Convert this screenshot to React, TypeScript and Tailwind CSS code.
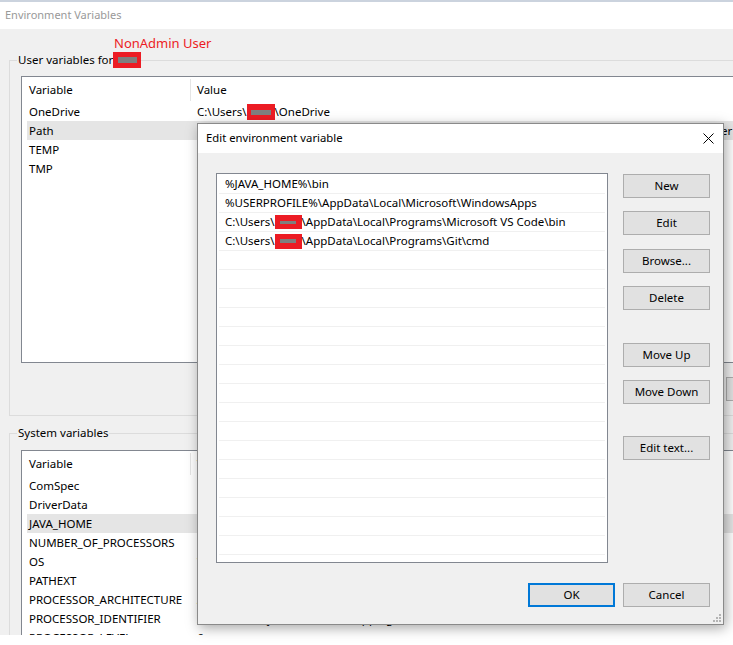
import type { ReactNode } from "react";

const FONT = "font-['Segoe_UI','Noto_Sans',sans-serif]";

function Redact({ w, h, bw, bh }: { w: number; h: number; bw: number; bh: number }) {
  return (
    <span
      className="inline-flex items-center justify-center bg-[#ec1c24] align-middle"
      style={{ width: w, height: h }}
    >
      <span className="block bg-[#7f7f7f]" style={{ width: bw, height: bh }} />
    </span>
  );
}

type Row = { name: string; value: ReactNode; selected?: boolean };

const USER_ROWS: Row[] = [
  {
    name: "OneDrive",
    value: (
      <>
        C:\Users\
        <Redact w={28} h={16} bw={20} bh={5} />
        \OneDrive
      </>
    ),
  },
  {
    name: "Path",
    selected: true,
    value: (
      <>
        <span className="inline-block w-[524px] overflow-hidden whitespace-nowrap align-top">
          C:\Users\Administrator\AppData\Local\Microsoft\WindowsApps;C:\Users\Administrator\AppData\Local\Programs\Microsoft VS Code\bin;C:\Us
        </span>
        er
      </>
    ),
  },
  { name: "TEMP", value: "%USERPROFILE%\\AppData\\Local\\Temp" },
  { name: "TMP", value: "%USERPROFILE%\\AppData\\Local\\Temp" },
];

const SYSTEM_ROWS: Row[] = [
  { name: "ComSpec", value: "C:\\Windows\\system32\\cmd.exe" },
  { name: "DriverData", value: "C:\\Windows\\System32\\Drivers\\DriverData" },
  { name: "JAVA_HOME", value: "C:\\Program Files\\Java\\jdk-17", selected: true },
  { name: "NUMBER_OF_PROCESSORS", value: "8" },
  { name: "OS", value: "Windows_NT" },
  { name: "PATHEXT", value: ".COM;.EXE;.BAT;.CMD;.VBS;.VBE;.JS;.JSE;.WSF;.WSH;.MSC" },
  { name: "PROCESSOR_ARCHITECTURE", value: "AMD64" },
  { name: "PROCESSOR_IDENTIFIER", value: "Intel64 Family 6 Model 142 Stepping 10, GenuineIntel" },
  { name: "PROCESSOR_LEVEL", value: "6" },
];

function ListView({ rows, className }: { rows: Row[]; className: string }) {
  return (
    <div className={`border border-[#828790] bg-white ${className}`}>
      {/* Header */}
      <div className="flex h-[25px] items-center">
        <div className="w-[168px] pl-[7px]">Variable</div>
        <div className="h-[22px] w-px bg-[#e5e5e5]" />
        <div className="pl-[6px]">Value</div>
      </div>
      {rows.map((r) => (
        <div
          key={r.name}
          className={`ml-[5px] flex h-[19px] items-center whitespace-nowrap ${r.selected ? "bg-[#e5e5e5]" : ""}`}
        >
          <div className="w-[170px] shrink-0 pl-[2px]">{r.name}</div>
          <div>{r.value}</div>
        </div>
      ))}
    </div>
  );
}

function Button({ children, className = "", primary = false }: { children: ReactNode; className?: string; primary?: boolean }) {
  return (
    <button
      className={`flex h-[24px] w-[87px] items-center justify-center bg-[#e1e1e1] text-black ${
        primary ? "border-2 border-[#0078d7]" : "border border-[#adadad]"
      } ${className}`}
    >
      {children}
    </button>
  );
}

const PATH_ENTRIES: ReactNode[] = [
  "%JAVA_HOME%\\bin",
  "%USERPROFILE%\\AppData\\Local\\Microsoft\\WindowsApps",
  <>
    C:\Users\
    <Redact w={27} h={14} bw={16} bh={3} />
    \AppData\Local\Programs\Microsoft VS Code\bin
  </>,
  <>
    C:\Users\
    <Redact w={27} h={15} bw={16} bh={4} />
    \AppData\Local\Programs\Git\cmd
  </>,
];

function EditDialog() {
  const rows = Array.from({ length: 20 }, (_, i) => PATH_ENTRIES[i] ?? null);
  return (
    <div className="absolute left-[197px] top-[123px] flex h-[502px] w-[527px] flex-col border border-[#8a8a8a] bg-[#f0f0f0] shadow-[2px_3px_12px_rgba(0,0,0,0.35)]">
      <div className="flex h-[29px] items-center justify-between bg-white pl-[8px] pr-[9px] text-[11.3px]">
        <span>Edit environment variable</span>
        <svg width="11" height="11" viewBox="0 0 11 11">
          <path d="M0.5 0.5 L10.5 10.5 M10.5 0.5 L0.5 10.5" stroke="#000" strokeWidth="1" />
        </svg>
      </div>

      <div className="relative flex-1 pl-[18px] pr-[13px] pt-[20px]">
        <div className="flex gap-[15px]">
          <div className="h-[390px] w-[392px] border border-[#828790] bg-white p-px">
            {rows.map((entry, i) => (
              <div key={i} className="mx-px flex h-[19px] items-center border-b border-[#f0f0f0] pl-[6px] whitespace-nowrap">
                {entry}
              </div>
            ))}
          </div>

          <div className="flex flex-col pt-px">
            <Button>New</Button>
            <Button className="mt-[13px]">Edit</Button>
            <Button className="mt-[14px]">Browse...</Button>
            <Button className="mt-[13px]">Delete</Button>
            <Button className="mt-[33px]">Move Up</Button>
            <Button className="mt-[13px]">Move Down</Button>
            <Button className="mt-[32px]">Edit text...</Button>
          </div>
        </div>

        <div className="mt-[20px] flex justify-end gap-[8px]">
          <Button primary>OK</Button>
          <Button>Cancel</Button>
        </div>

        {/* resize grip */}
        <svg className="absolute bottom-[2px] right-[2px]" width="9" height="9" viewBox="0 0 9 9">
          <g fill="#b4b4b4">
            <rect x="7" y="1" width="2" height="2" />
            <rect x="4" y="4" width="2" height="2" />
            <rect x="7" y="4" width="2" height="2" />
            <rect x="1" y="7" width="2" height="2" />
            <rect x="4" y="7" width="2" height="2" />
            <rect x="7" y="7" width="2" height="2" />
          </g>
        </svg>
      </div>
    </div>
  );
}

export default function App() {
  return (
    <div className={`relative h-[645px] w-[733px] overflow-hidden bg-white text-[11.5px] text-black ${FONT}`}>
      {/* Main window */}
      <div className="h-[2px] bg-[#cbd3de]" />
      <div className="flex h-[27px] items-center pl-[5px] text-[11px] text-[#999999]">Environment Variables</div>

      <div className="h-[606px] overflow-hidden bg-[#f0f0f0]">
        <div className="h-[31px] pl-[114px] pt-[6px] text-[13px] leading-[16px] text-[#ec1c24]">NonAdmin User</div>

        {/* User variables */}
        <div className="relative ml-[9px] h-[356px] w-[760px] border border-[#dcdcdc]">
          <div className="absolute -top-[9px] left-[7px] flex items-center bg-[#f0f0f0] pl-px leading-[16px]">
            <span>User variables for</span>
            <Redact w={28} h={16} bw={19} bh={6} />
          </div>
          <ListView rows={USER_ROWS} className="ml-[11px] mt-[15px] h-[287px] w-[740px]" />
          <div className="ml-[716px] mt-[14px] flex gap-[8px]">
            <button className="h-[24px] w-[75px] shrink-0 border border-[#adadad] bg-[#e1e1e1]">New...</button>
            <button className="h-[24px] w-[75px] shrink-0 border border-[#adadad] bg-[#e1e1e1]">Edit...</button>
          </div>
        </div>

        {/* System variables */}
        <div className="relative ml-[9px] mt-[17px] h-[300px] w-[760px] border border-[#dcdcdc]">
          <div className="absolute -top-[9px] left-[7px] bg-[#f0f0f0] pl-px leading-[16px]">System variables</div>
          <ListView rows={SYSTEM_ROWS} className="ml-[11px] mt-[16px] h-[400px] w-[740px]" />
        </div>
      </div>

      <EditDialog />
    </div>
  );
}
